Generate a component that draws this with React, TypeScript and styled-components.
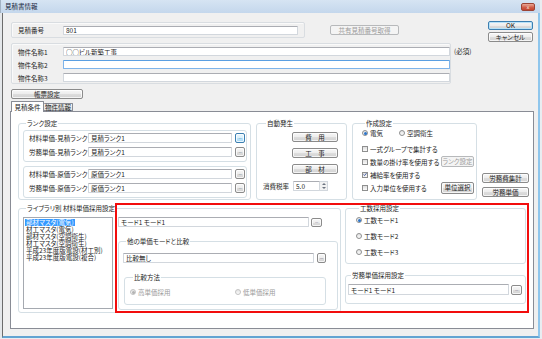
import React from 'react';
import styled, { createGlobalStyle, css } from 'styled-components';

const GlobalStyle = createGlobalStyle`
  * { box-sizing: border-box; }
  html, body { margin: 0; padding: 0; }
  body {
    width: 542px;
    height: 339px;
    overflow: hidden;
    background: #e9edf1;
    font-family: "Noto Sans CJK JP", "Noto Sans", sans-serif;
    font-size: 6.5px;
    font-feature-settings: "palt";
    color: #1c1c1c;
  }
`;

const Frame = styled.div`
  position: relative;
  width: 540px;
  height: 338px;
  display: flex;
  flex-direction: column;
  background: #e4e7ea;
`;

const TitleBar = styled.div`
  flex: none;
  height: 13px;
  display: flex;
  align-items: center;
  justify-content: space-between;
  padding: 0 5px 0 4px;
  background: linear-gradient(#d6e4f3, #c4d7ec);
  border-left: 1px solid #a3b3c4;
`;

const TitleText = styled.span`
  line-height: 13px;
  color: #14233a;
`;

const CloseButton = styled.span`
  width: 14px;
  height: 8px;
  border: 1px solid #9c4435;
  border-radius: 2px;
  background: linear-gradient(#eaa897, #cf5a45 60%, #c4432f);
  color: #f6e3de;
  font-family: "DejaVu Sans", sans-serif;
  font-size: 5px;
  line-height: 6px;
  text-align: center;
`;

const Client = styled.div`
  flex: 1;
  display: flex;
  flex-direction: column;
  margin-left: 2px;
  padding: 9px 4px 7px 7px;
  background: #f0f0f0;
  border-left: 1px solid #6c6c6c;
  border-right: 2px solid #8fc6ec;
  border-bottom: 2px solid #63a4d2;
`;

const TopArea = styled.div`
  display: flex;
  margin-left: 1px;
`;

const TopLeft = styled.div`
  flex: 1;
  display: flex;
  flex-direction: column;
  align-items: flex-start;
`;

const DialogButtons = styled.div`
  display: flex;
  flex-direction: column;
  gap: 2px;
  margin: -1px 1px 0 0;
`;

const Row = styled.div<{ $h?: number; $mt?: number; $ml?: number; $top?: boolean }>`
  flex: none;
  display: flex;
  align-items: ${p => (p.$top ? 'flex-start' : 'center')};
  height: ${p => p.$h ?? 10}px;
  margin-top: ${p => p.$mt ?? 0}px;
  margin-left: ${p => p.$ml ?? 0}px;
`;

const PlainBox = styled.div<{ $w: number }>`
  width: ${p => p.$w}px;
  border: 1px solid #d9dde1;
  border-radius: 2px;
  box-shadow: inset 1px 1px 0 #fafafa;
`;

const NumberBox = styled(PlainBox)`
  height: 16px;
  display: flex;
  align-items: center;
  padding-left: 6px;
`;

const NameBox = styled(PlainBox)`
  height: 41px;
  display: flex;
  flex-direction: column;
  gap: 4px;
  padding: 3px 0 0 6px;
`;

const Label = styled.span<{ $w?: number; $muted?: boolean }>`
  flex: none;
  width: ${p => (p.$w ? `${p.$w}px` : 'auto')};
  white-space: nowrap;
  line-height: 8px;
  color: ${p => (p.$muted ? '#9a9a9a' : '#1c1c1c')};
`;

const RequiredNote = styled.span`
  margin: 4px 0 0 3px;
  line-height: 9px;
  white-space: nowrap;
`;

const TextBox = styled.input<{ $w: number; $h?: number; $focus?: boolean }>`
  flex: none;
  width: ${p => p.$w}px;
  height: ${p => p.$h ?? 10}px;
  margin: 0;
  padding: 0 2px;
  font: inherit;
  font-size: 6.5px;
  color: #1c1c1c;
  background: #fff;
  border: 1px solid ${p => (p.$focus ? '#7eb4ea' : '#d2d7dd')};
  border-top-color: ${p => (p.$focus ? '#5a9fe2' : '#abadb3')};
  border-radius: 1px;
  outline: none;
`;

const Button = styled.button<{ $w: number; $h?: number; $default?: boolean; $hot?: boolean; $ml?: number; $mt?: number; $push?: boolean }>`
  flex: none;
  width: ${p => p.$w}px;
  height: ${p => p.$h ?? 10}px;
  margin: ${p => p.$mt ?? 0}px 0 0 ${p => (p.$push ? 'auto' : `${p.$ml ?? 0}px`)};
  padding: 0;
  display: flex;
  align-items: center;
  justify-content: center;
  font: inherit;
  font-size: 6.5px;
  line-height: 1;
  white-space: nowrap;
  color: #1c1c1c;
  border: 1px solid #8b8b8b;
  border-radius: 2px;
  background: linear-gradient(#f7f7f7 0%, #ededed 50%, #dedede 51%, #d2d2d2 100%);
  box-shadow: inset 0 0 0 1px rgba(255, 255, 255, 0.75);
  ${p =>
    p.$default &&
    css`
      border-color: #3c7fb1;
      box-shadow: inset 0 0 0 1px #b8e2f8;
    `}
  ${p =>
    p.$hot &&
    css`
      border-color: #3c7fb1;
      background: linear-gradient(#eaf6fd 0%, #d9f0fc 50%, #bee6fd 51%, #a7d9f5 100%);
    `}
  &:disabled {
    color: #9c9c9c;
    border-color: #b7b9bb;
    background: #f4f4f4;
    box-shadow: none;
  }
`;

const DotButton = styled(Button)`
  align-items: flex-end;
  padding-bottom: 2px;
  font-family: "DejaVu Sans", sans-serif;
  font-size: 4px;
  letter-spacing: -0.3px;
  color: #2b3f63;
`;

const TabStrip = styled.div`
  position: relative;
  z-index: 1;
  display: flex;
  align-items: flex-end;
  height: 10px;
  margin: 2px 0 0 1px;
`;

const Tab = styled.div<{ $active?: boolean; $w: number }>`
  width: ${p => p.$w}px;
  height: ${p => (p.$active ? 11 : 8)}px;
  margin-bottom: ${p => (p.$active ? -1 : 0)}px;
  border: 1px solid #898c95;
  border-bottom: ${p => (p.$active ? 'none' : '1px solid #898c95')};
  border-left: ${p => (p.$active ? '1px solid #898c95' : 'none')};
  border-radius: 1px 1px 0 0;
  background: ${p => (p.$active ? '#fff' : 'linear-gradient(#f3f3f3, #e2e2e2)')};
  line-height: ${p => (p.$active ? 10 : 7)}px;
  text-align: center;
  white-space: nowrap;
`;

const TabPanel = styled.div`
  flex: 1;
  display: flex;
  flex-direction: column;
  padding: 11px 0 0 7px;
  background: #fff;
  border: 1px solid #898c95;
`;

const TopRow = styled.div`
  display: flex;
  height: 77px;
`;

const BottomRow = styled.div`
  display: flex;
  align-items: flex-start;
  margin-top: 8px;
`;

const Group = styled.div<{ $w: number; $ml?: number; $mt?: number; $pad?: string }>`
  flex: none;
  display: flex;
  flex-direction: column;
  width: ${p => p.$w}px;
  margin: ${p => p.$mt ?? 0}px 0 0 ${p => p.$ml ?? 0}px;
  padding: ${p => p.$pad ?? '0'};
  border: 1px solid #d5dfe5;
  border-radius: 3px;
`;

const GroupTitle = styled.span`
  align-self: flex-start;
  height: 7px;
  margin: -4px 0 0 3px;
  padding: 0 1px;
  line-height: 7px;
  white-space: nowrap;
  background: #fff;
`;

const SubBox = styled.div<{ $mt: number }>`
  display: flex;
  flex-direction: column;
  gap: 4px;
  margin-top: ${p => p.$mt}px;
  padding: 2px 1px 4px 5px;
  border: 1px solid #d5dfe5;
  border-radius: 3px;
`;

const Stack = styled.div<{ $gap?: number; $mt?: number; $end?: boolean }>`
  display: flex;
  flex-direction: column;
  align-items: ${p => (p.$end ? 'flex-end' : 'stretch')};
  gap: ${p => p.$gap ?? 0}px;
  margin-top: ${p => p.$mt ?? 0}px;
`;

const SideButtons = styled.div`
  flex: none;
  display: flex;
  flex-direction: column;
  justify-content: flex-end;
  gap: 4px;
  margin-left: 5px;
  padding-bottom: 3px;
`;

const Option = styled.label<{ $w?: number; $muted?: boolean }>`
  flex: none;
  display: flex;
  align-items: center;
  gap: 2px;
  width: ${p => (p.$w ? `${p.$w}px` : 'auto')};
  white-space: nowrap;
  line-height: 8px;
  color: ${p => (p.$muted ? '#9a9a9a' : '#1c1c1c')};
`;

const RadioMark = styled.span<{ $on?: boolean; $muted?: boolean }>`
  flex: none;
  width: 6px;
  height: 6px;
  border-radius: 50%;
  border: 1px solid ${p => (p.$muted ? '#c3c3c3' : '#8e8f8f')};
  background: linear-gradient(#e4e4e4, #fbfbfb);
  display: flex;
  align-items: center;
  justify-content: center;
  &::after {
    content: '';
    display: ${p => (p.$on ? 'block' : 'none')};
    width: 3px;
    height: 3px;
    border-radius: 50%;
    background: ${p => (p.$muted ? '#b3b3b3' : '#2b74c9')};
  }
`;

const CheckMark = styled.span`
  flex: none;
  width: 6px;
  height: 6px;
  border: 1px solid #8e8f8f;
  background: linear-gradient(#dedede, #fafafa);
  display: flex;
  align-items: center;
  justify-content: center;
`;

const ListBox = styled.div`
  flex: none;
  width: 90px;
  height: 92px;
  padding: 1px 0 0 1px;
  display: flex;
  flex-direction: column;
  align-items: flex-start;
  background: #fff;
  border: 1px solid #a5a9b0;
`;

const ListItem = styled.span<{ $selected?: boolean }>`
  flex: none;
  height: 7px;
  padding: 0 1px;
  font-size: 6.5px;
  line-height: 7px;
  white-space: nowrap;
  background: ${p => (p.$selected ? '#3399ff' : 'transparent')};
  color: ${p => (p.$selected ? '#fff' : '#1c1c1c')};
`;

const Column = styled.div<{ $w: number; $ml: number }>`
  flex: none;
  display: flex;
  flex-direction: column;
  width: ${p => p.$w}px;
  margin-left: ${p => p.$ml}px;
`;

const Spinner = styled.div`
  flex: none;
  width: 8px;
  height: 10px;
  display: flex;
  flex-direction: column;
  background: #f2f2f2;
  border: 1px solid #d2d7dd;
  border-left: none;
`;

const SpinHalf = styled.span`
  flex: 1;
  display: flex;
  align-items: center;
  justify-content: center;
`;

const Highlight = styled.div`
  position: absolute;
  left: 115px;
  top: 203px;
  width: 414px;
  height: 110px;
  border: 2px solid #f20d0d;
  pointer-events: none;
`;

function Radio({ label, on, muted, w }: { label: string; on?: boolean; muted?: boolean; w?: number }) {
  return (
    <Option $w={w} $muted={muted}>
      <RadioMark $on={on} $muted={muted} />
      {label}
    </Option>
  );
}

function Check({ label, on }: { label: string; on?: boolean }) {
  return (
    <Option>
      <CheckMark>
        {on && (
          <svg width="5" height="5" viewBox="0 0 5 5">
            <path d="M0.6 2.6 L1.9 3.9 L4.4 0.8" fill="none" stroke="#23429a" strokeWidth="1" />
          </svg>
        )}
      </CheckMark>
      {label}
    </Option>
  );
}

function RankRow({ label, value, hot }: { label: string; value: string; hot?: boolean }) {
  return (
    <Row>
      <Label $w={59}>{label}</Label>
      <TextBox $w={144} readOnly value={value} />
      <DotButton $w={10} $ml={3} $hot={hot}>...</DotButton>
    </Row>
  );
}

const libraries = [
  '部材マスタ(電気)',
  '材工マスタ(電気)',
  '部材マスタ(空調衛生)',
  '材工マスタ(空調衛生)',
  '平成23年度版電設(材工別)',
  '平成23年度版電設(複合)',
];

export default function App() {
  return (
    <>
      <GlobalStyle />
      <Frame>
        <TitleBar>
          <TitleText>見積書情報</TitleText>
          <CloseButton>x</CloseButton>
        </TitleBar>
        <Client>
          <TopArea>
            <TopLeft>
              <Row $h={16}>
                <NumberBox $w={294}>
                  <Label $w={45}>見積番号</Label>
                  <TextBox $w={235} $h={9} readOnly value="801" />
                </NumberBox>
                <Button $w={69} $ml={25} disabled>共有見積番号取得</Button>
              </Row>
              <Row $h={41} $mt={5} $top>
                <NameBox $w={440}>
                  <Row $h={9}>
                    <Label $w={45}>物件名称1</Label>
                    <TextBox $w={387} $h={9} readOnly value="○○ビル新築工事" />
                  </Row>
                  <Row $h={9}>
                    <Label $w={45}>物件名称2</Label>
                    <TextBox $w={387} $h={9} $focus readOnly value="" />
                  </Row>
                  <Row $h={9}>
                    <Label $w={45}>物件名称3</Label>
                    <TextBox $w={387} $h={9} readOnly value="" />
                  </Row>
                </NameBox>
                <RequiredNote>(必須)</RequiredNote>
              </Row>
              <Button $w={72} $mt={5}>帳票設定</Button>
            </TopLeft>
            <DialogButtons>
              <Button $w={45} $h={9} $default>OK</Button>
              <Button $w={45}>キャンセル</Button>
            </DialogButtons>
          </TopArea>

          <TabStrip>
            <Tab $w={33} $active>見積条件</Tab>
            <Tab $w={29}>物件情報</Tab>
          </TabStrip>

          <TabPanel>
            <TopRow>
              <Group $w={233} $pad="0 3px 0 4px">
                <GroupTitle>ランク設定</GroupTitle>
                <SubBox $mt={3}>
                  <RankRow label="材料単価-見積ランク" value="見積ランク1" hot />
                  <RankRow label="労務単価-見積ランク" value="見積ランク1" />
                </SubBox>
                <SubBox $mt={4}>
                  <RankRow label="材料単価-原価ランク" value="原価ランク1" />
                  <RankRow label="労務単価-原価ランク" value="原価ランク1" />
                </SubBox>
              </Group>

              <Group $w={91} $ml={5} $pad="0 8px 0 6px">
                <GroupTitle>自動発生</GroupTitle>
                <Stack $gap={6} $mt={5} $end>
                  <Button $w={46}>費　用</Button>
                  <Button $w={46}>工　事</Button>
                  <Button $w={46}>部　材</Button>
                </Stack>
                <Row $mt={7}>
                  <Label $w={30}>消費税率</Label>
                  <TextBox $w={27} readOnly value="5.0" />
                  <Spinner>
                    <SpinHalf>
                      <svg width="4" height="2" viewBox="0 0 4 2">
                        <path d="M0 2 L2 0 L4 2 Z" fill="#6d7480" />
                      </svg>
                    </SpinHalf>
                    <SpinHalf>
                      <svg width="4" height="2" viewBox="0 0 4 2">
                        <path d="M0 0 L2 2 L4 0 Z" fill="#6d7480" />
                      </svg>
                    </SpinHalf>
                  </Spinner>
                </Row>
              </Group>

              <Group $w={125} $ml={5} $pad="0 2px 0 9px">
                <GroupTitle>作成設定</GroupTitle>
                <Row $h={8} $mt={2}>
                  <Radio label="電気" on w={37} />
                  <Radio label="空調衛生" />
                </Row>
                <Stack $gap={2} $mt={6}>
                  <Row $h={11}>
                    <Check label="一式グループで集計する" />
                  </Row>
                  <Row $h={11}>
                    <Check label="数量の掛け率を使用する" />
                    <Button $w={33} $h={11} $push disabled>ランク設定</Button>
                  </Row>
                  <Row $h={11}>
                    <Check label="補給率を使用する" on />
                  </Row>
                  <Row $h={11}>
                    <Check label="入力単位を使用する" />
                    <Button $w={33} $h={12} $push>単位選択</Button>
                  </Row>
                </Stack>
              </Group>

              <SideButtons>
                <Button $w={47}>労務費集計</Button>
                <Button $w={47}>労務単価</Button>
              </SideButtons>
            </TopRow>

            <BottomRow>
              <Group $w={323} $pad="0 0 2px 4px">
                <GroupTitle>ライブラリ別 材料単価採用設定</GroupTitle>
                <Row $h={93} $mt={5} $top>
                  <ListBox>
                    {libraries.map((name, i) => (
                      <ListItem key={name} $selected={i === 0}>{name}</ListItem>
                    ))}
                  </ListBox>
                  <Column $w={220} $ml={5}>
                    <Row>
                      <TextBox $w={191} readOnly value="モード1 モード1" />
                      <DotButton $w={11} $h={9} $ml={2}>...</DotButton>
                    </Row>
                    <Group $w={220} $mt={14} $pad="0 11px 4px 4px">
                      <GroupTitle>他の単価モードと比較</GroupTitle>
                      <Row $mt={8}>
                        <TextBox $w={191} readOnly value="比較無し" />
                        <DotButton $w={9} $ml={3}>...</DotButton>
                      </Row>
                      <Group $w={202} $ml={1} $mt={14} $pad="0 0 8px 5px">
                        <GroupTitle>比較方法</GroupTitle>
                        <Row $h={8} $mt={7}>
                          <Radio label="高単価採用" on muted w={105} />
                          <Radio label="低単価採用" muted />
                        </Row>
                      </Group>
                    </Group>
                  </Column>
                </Row>
              </Group>

              <Column $w={181} $ml={4}>
                <Group $w={181} $pad="0 0 7px 10px">
                  <GroupTitle>工数採用設定</GroupTitle>
                  <Stack $gap={8} $mt={4}>
                    <Row $h={8}>
                      <Radio label="工数モード1" on />
                    </Row>
                    <Row $h={8}>
                      <Radio label="工数モード2" />
                    </Row>
                    <Row $h={8}>
                      <Radio label="工数モード3" />
                    </Row>
                  </Stack>
                </Group>
                <Group $w={181} $mt={11} $pad="0 3px 8px 2px">
                  <GroupTitle>労務単価採用設定</GroupTitle>
                  <Row $h={11} $mt={5}>
                    <TextBox $w={161} $h={11} readOnly value="モード1 モード1" />
                    <DotButton $w={11} $ml={2}>...</DotButton>
                  </Row>
                </Group>
              </Column>
            </BottomRow>
          </TabPanel>
        </Client>
        <Highlight />
      </Frame>
    </>
  );
}
